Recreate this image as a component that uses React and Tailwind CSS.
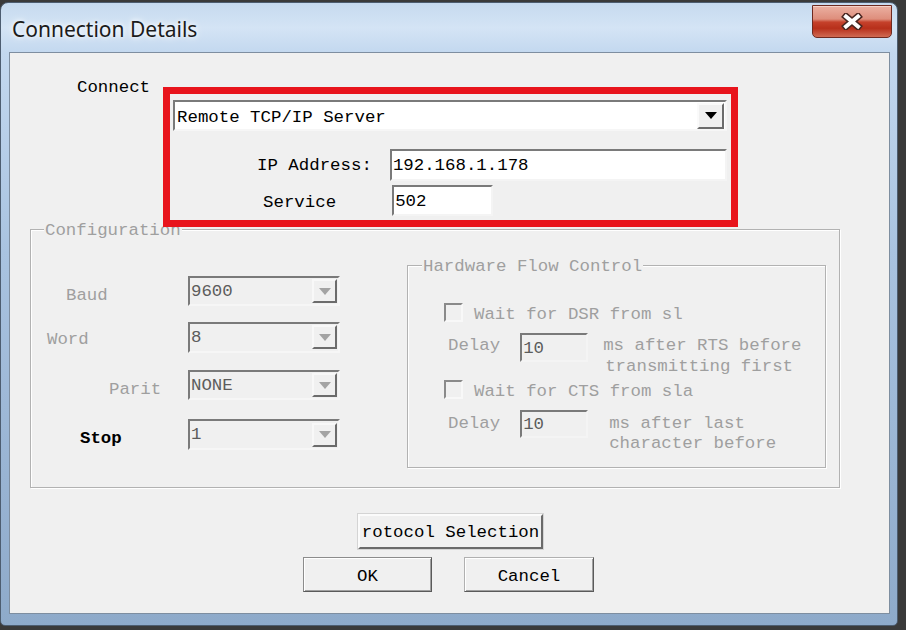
import React from "react";

function Tri({ color }) {
  return (
    <svg width="12" height="7" viewBox="0 0 12 7">
      <path d="M0 0H12L6 7Z" fill={color} />
    </svg>
  );
}

function Combo({ value, disabled, className }) {
  return (
    <div
      className={
        "flex items-center justify-between border-2 border-t-[#7a7a7a] border-l-[#7a7a7a] border-r-[#f6f6f6] border-b-[#f6f6f6] " +
        className
      }
    >
      <span className={disabled ? "pl-[1px] pt-[1px] leading-[20px] text-[#5c5c5c]" : "pl-[2px] pt-[5px] leading-[20px] text-black"}>
        {value}
      </span>
      <div
        className={
          disabled
            ? "mr-[1px] w-[25px] h-[24px] flex items-center justify-center bg-[#f0f0f0] border-2 border-t-[#f8f8f8] border-l-[#f8f8f8] border-r-[#6c6c6c] border-b-[#6c6c6c]"
            : "mr-[1px] w-[27px] h-[26px] flex items-center justify-center bg-[#f0f0f0] border-2 border-t-[#fafafa] border-l-[#fafafa] border-r-[#6c6c6c] border-b-[#6c6c6c]"
        }
      >
        <Tri color={disabled ? "#a3a3a3" : "#000"} />
      </div>
    </div>
  );
}

function Field({ value, className, disabled }) {
  return (
    <div
      className={
        "flex items-center border-2 border-t-[#7a7a7a] border-l-[#7a7a7a] border-r-[#f4f4f4] border-b-[#f4f4f4] " +
        (disabled ? "bg-[#f0f0f0] text-[#5c5c5c] " : "bg-white text-black ") +
        className
      }
    >
      <span className="pl-[1px] pt-[2px] leading-[20px]">{value}</span>
    </div>
  );
}

function Check() {
  return (
    <div className="w-[19px] h-[19px] shrink-0 bg-[#f0f0f0] border-2 border-t-[#8a8a8a] border-l-[#8a8a8a] border-r-[#f8f8f8] border-b-[#f8f8f8]" />
  );
}

export default function App() {
  return (
    <div className="w-[906px] h-[630px] bg-[#3a3a3a] overflow-hidden font-['Liberation_Mono',monospace] text-[17.4px]">
      <div className="w-[898px] h-[624px] mt-[2px] rounded-t-[8px] rounded-b-[5px] border border-[#4d5d70] bg-[linear-gradient(180deg,#c6daef_0%,#d4e4f5_4%,#c3d8ef_8%,#a9c3e0_40%,#8eaaca_100%)] flex flex-col">
        {/* title bar */}
        <div className="h-[49px] shrink-0 flex justify-between pl-[11px] pr-[5px]">
          <div className="mt-[12px] leading-[28px] text-[21px] text-[#1b1b1b] font-['Noto_Sans',sans-serif] [text-shadow:0_0_8px_#fff,0_0_4px_#fff]">
            Connection Details
          </div>
          <div className="mt-[2px] w-[80px] h-[33px] rounded-b-[5px] border border-[#6e2a20] bg-[linear-gradient(180deg,#ebb0a2_0%,#de8e7c_42%,#c5412b_52%,#b7301b_72%,#d06a52_100%)] shadow-[inset_0_1px_0_#f6d2c8] flex items-center justify-center">
            <svg width="22" height="17" viewBox="0 0 22 17">
              <path d="M5 3.5L17 13.5M17 3.5L5 13.5" stroke="#4a2620" strokeWidth="7" strokeLinecap="square" />
              <path d="M5 3.5L17 13.5M17 3.5L5 13.5" stroke="#fff" strokeWidth="4" strokeLinecap="square" />
            </svg>
          </div>
        </div>

        {/* client */}
        <div className="ml-[8px] mr-[7px] mb-[11px] flex-1 border border-[#7e8ea0] bg-[#f0f0f0] flex flex-col">
          <div className="flex items-start pt-[23px]">
            <div className="ml-[67px] mt-[2px] leading-[20px] text-black">Connect</div>
            <div className="relative z-10 ml-[13px] mt-[11px] w-[575px] h-[140px] shrink-0 border-[7px] border-[#e8141c] pt-[6px] pl-[3px]">
              <Combo value="Remote TCP/IP Server" className="w-[554px] h-[31px] bg-white" />
              <div className="flex items-center mt-[18px]">
                <div className="ml-[84px] pt-[2px] leading-[20px] text-black">IP Address:</div>
                <Field value="192.168.1.178" className="ml-[18px] w-[337px] h-[32px]" />
              </div>
              <div className="flex items-center mt-[4px]">
                <div className="ml-[90px] pt-[5px] leading-[20px] text-black">Service</div>
                <Field value="502" className="ml-[56px] w-[101px] h-[31px]" />
              </div>
            </div>
          </div>

          {/* Configuration group */}
          <div className="relative ml-[20px] mt-[2px] w-[810px] h-[259px] border border-[#b2b2b2] shadow-[inset_1px_1px_0_#fff,1px_1px_0_#fff] flex items-start">
            <div className="absolute left-[13px] -top-[9px] px-[1px] bg-[#f0f0f0] leading-[20px] text-[#9f9f9f]">
              Configuration
            </div>
            <div className="flex flex-col pt-[46px] w-[309px] shrink-0">
              <div className="flex items-center h-[30px]">
                <div className="w-[157px] pl-[35px] text-[#9f9f9f] leading-[20px] mt-[10px]">Baud</div>
                <Combo value="9600" disabled className="w-[152px] h-[30px] bg-[#f0f0f0]" />
              </div>
              <div className="flex items-center h-[30px] mt-[16px]">
                <div className="w-[157px] pl-[16px] text-[#9f9f9f] leading-[20px] mt-[6px]">Word</div>
                <Combo value="8" disabled className="w-[152px] h-[31px] bg-[#f0f0f0]" />
              </div>
              <div className="flex items-center h-[30px] mt-[18px]">
                <div className="w-[157px] pl-[78px] text-[#9f9f9f] leading-[20px] mt-[9px]">Parit</div>
                <Combo value="NONE" disabled className="w-[152px] h-[30px] bg-[#f0f0f0]" />
              </div>
              <div className="flex items-center h-[31px] mt-[19px]">
                <div className="w-[157px] pl-[49px] text-black font-bold leading-[20px] mt-[8px]">Stop</div>
                <Combo value="1" disabled className="w-[152px] h-[31px] bg-[#f0f0f0]" />
              </div>
            </div>

            {/* Hardware flow control */}
            <div className="relative ml-[67px] mt-[35px] w-[419px] h-[203px] shrink-0 border border-[#b2b2b2] shadow-[inset_1px_1px_0_#fff,1px_1px_0_#fff] pt-[37px] pl-[36px] text-[#9f9f9f]">
              <div className="absolute left-[14px] -top-[9px] px-[1px] bg-[#f0f0f0] leading-[20px]">
                Hardware Flow Control
              </div>
              <div className="flex items-center h-[19px]">
                <Check />
                <span className="ml-[11px] pt-[4px] leading-[20px]">Wait for DSR from sl</span>
              </div>
              <div className="flex items-start mt-[11px]">
                <div className="ml-[4px] mt-[2px] leading-[21px]">Delay</div>
                <Field value="10" disabled className="ml-[20px] w-[68px] h-[29px]" />
                <div className="ml-[15px] mt-[2px] leading-[21px]">
                  <div>ms after RTS before</div>
                  <div className="pl-[2px]">transmitting first</div>
                </div>
              </div>
              <div className="flex items-center h-[19px] mt-[3px]">
                <Check />
                <span className="ml-[11px] pt-[4px] leading-[20px]">Wait for CTS from sla</span>
              </div>
              <div className="flex items-start mt-[11px]">
                <div className="ml-[4px] mt-[4px] leading-[20px]">Delay</div>
                <Field value="10" disabled className="ml-[20px] w-[68px] h-[28px]" />
                <div className="ml-[21px] mt-[4px] leading-[20px]">
                  <div>ms after last</div>
                  <div>character before</div>
                </div>
              </div>
            </div>
          </div>

          {/* buttons */}
          <div className="flex flex-col items-center mt-[26px]">
            <div className="ml-[2px] w-[185px] h-[35px] flex items-center justify-center pt-[2px] bg-[#f0f0f0] border-2 border-t-[#fbfbfb] border-l-[#fbfbfb] border-r-[#6a6a6a] border-b-[#6a6a6a] shadow-[0_0_0_1px_#d4d4d4] text-black leading-[20px]">
              rotocol Selection
            </div>
            <div className="flex mr-[2px] mt-[8px] gap-[32px]">
              <div className="w-[129px] h-[35px] flex items-center justify-center pt-[4px] bg-[#f0f0f0] border border-[#8c8c8c] border-r-[#5a5a5a] border-b-[#5a5a5a] shadow-[inset_1px_1px_0_#fff,inset_-1px_-1px_0_#a0a0a0] text-black leading-[20px]">
                OK
              </div>
              <div className="w-[130px] h-[35px] flex items-center justify-center pt-[4px] bg-[#f0f0f0] border border-[#b0b0b0] border-r-[#5a5a5a] border-b-[#5a5a5a] shadow-[inset_1px_1px_0_#fff,inset_-1px_-1px_0_#a0a0a0] text-black leading-[20px]">
                Cancel
              </div>
            </div>
          </div>
        </div>
      </div>
    </div>
  );
}
